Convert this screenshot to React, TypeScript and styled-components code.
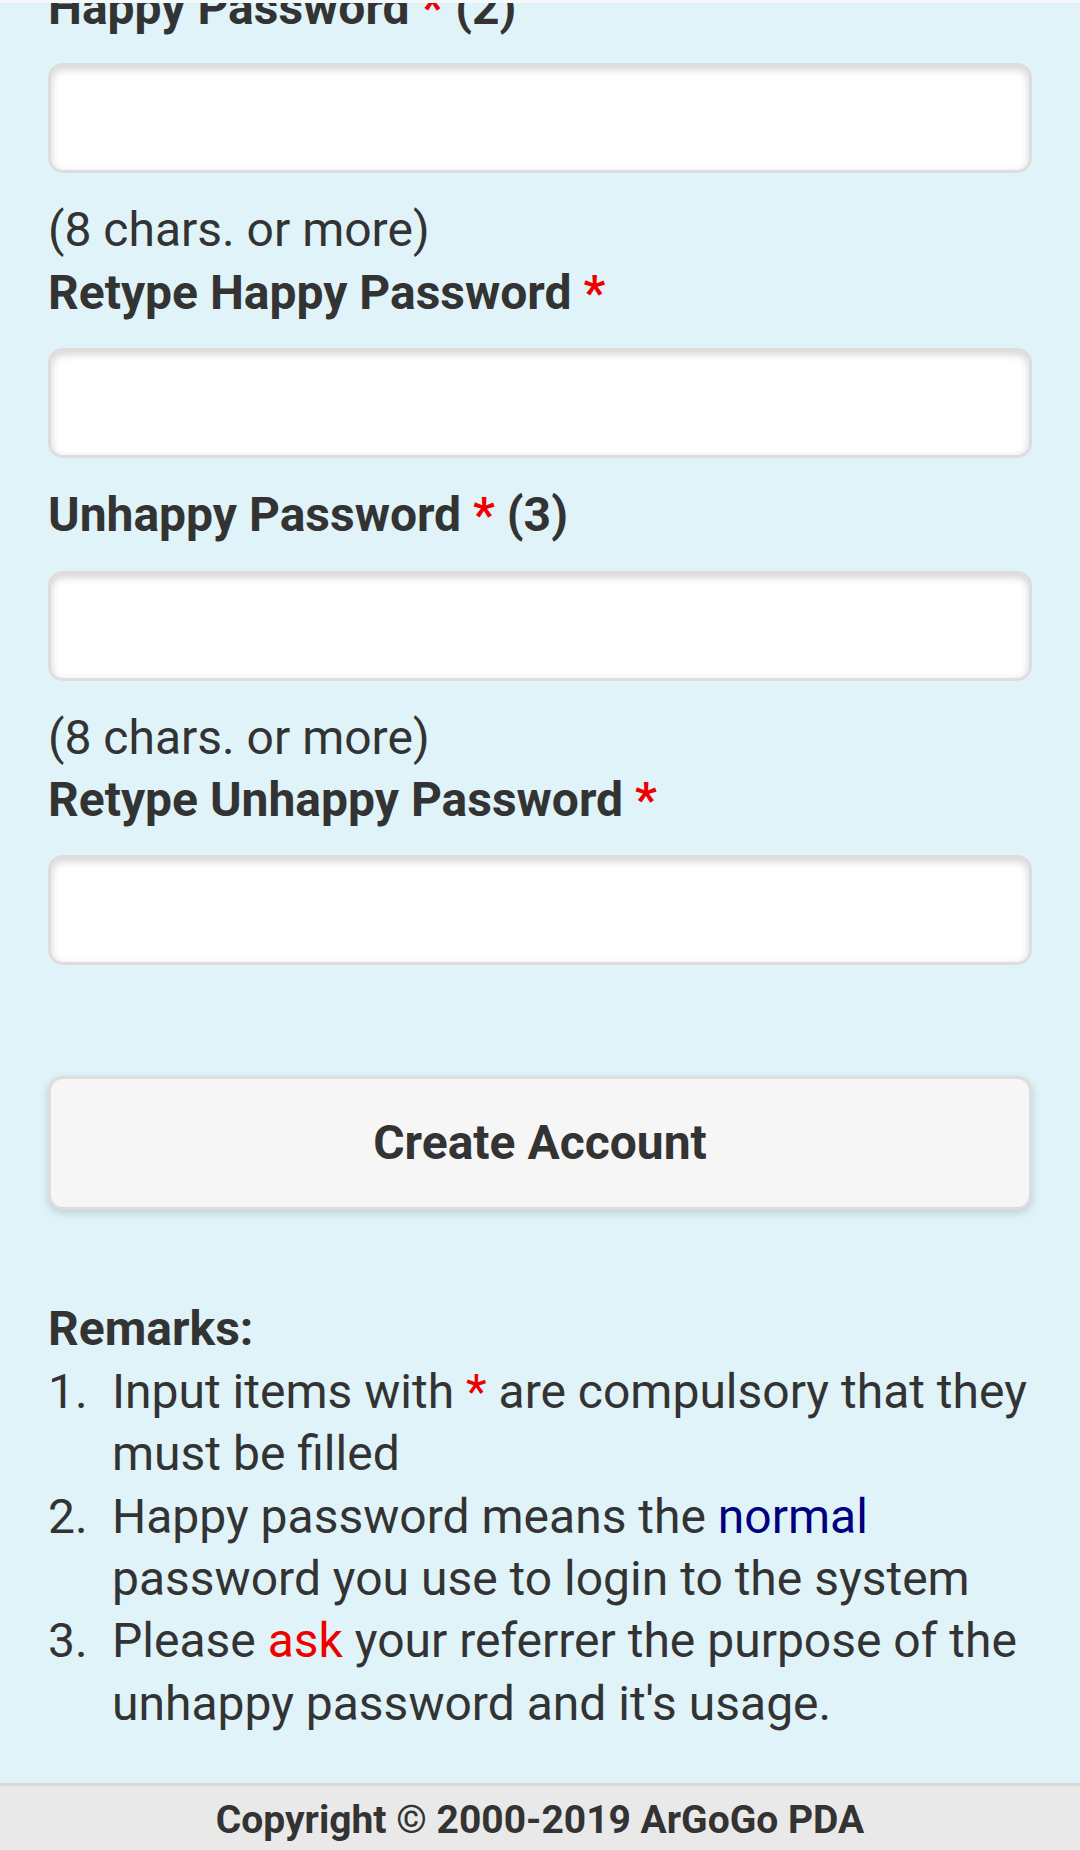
import React from "react";
import styled, { createGlobalStyle } from "styled-components";

const GlobalStyle = createGlobalStyle`
  html, body {
    margin: 0;
    padding: 0;
  }
  body {
    background: #dff3f8;
    font-family: Roboto, "Noto Sans", "Liberation Sans", sans-serif;
    color: #333;
  }
`;

const Page = styled.div`
  position: relative;
  height: 1850px;
  overflow: hidden;
  display: flex;
  flex-direction: column;
  font-size: 48px;
  line-height: 62.4px;
`;

// thin strip of the fixed header that shows above the scrolled content
const TopStrip = styled.div`
  position: absolute;
  top: 0;
  left: 0;
  right: 0;
  height: 3px;
  background: #f3f8fa;
`;

const Content = styled.div`
  margin-top: -23px;
  padding: 0 48px;
`;

const Label = styled.label`
  display: block;
  font-weight: 700;
`;

const Star = styled.span`
  color: #ee0000;
`;

const TextInput = styled.input`
  display: block;
  box-sizing: border-box;
  width: 100%;
  height: 110px;
  margin: 24px 0 26px;
  padding: 0 24px;
  border: 3px solid #dddddd;
  border-radius: 15px;
  background: #fff;
  box-shadow: inset 0 3px 9px rgba(0, 0, 0, 0.18);
  font: inherit;
  outline: none;
`;

const Hint = styled.div``;

const Button = styled.button`
  display: block;
  box-sizing: border-box;
  width: 100%;
  height: 134px;
  margin-top: 111px;
  border: 3px solid #dddddd;
  border-radius: 15px;
  background: #f6f6f6;
  box-shadow: 0 3px 9px rgba(0, 0, 0, 0.15);
  color: #333;
  font: inherit;
  font-weight: 700;
  cursor: pointer;
`;

const Remarks = styled.div`
  margin: 88px 0 48px;
`;

const RemarksTitle = styled.div`
  font-weight: 700;
`;

const List = styled.ol`
  list-style: none;
  margin: 0;
  padding: 0;
`;

const Item = styled.li`
  display: flex;
`;

const Num = styled.span`
  flex: 0 0 64px;
`;

const Normal = styled.span`
  color: #000080;
`;

const Ask = styled.span`
  color: #ee0000;
`;

const Footer = styled.footer`
  flex-shrink: 0;
  padding: 3px 0 4px;
  border-top: 3px solid #dadada;
  background: #e9e9e9;
  text-align: center;
  font-size: 39px;
  font-weight: 700;
`;

type FieldProps = {
  label: string;
  note?: string;
  hint?: boolean;
};

function Field({ label, note, hint }: FieldProps) {
  return (
    <>
      <Label>
        {label} <Star>*</Star>
        {note ? ` ${note}` : ""}
      </Label>
      <TextInput type="password" />
      {hint && <Hint>(8 chars. or more)</Hint>}
    </>
  );
}

export default function App() {
  return (
    <Page>
      <GlobalStyle />
      <TopStrip />
      <Content>
        <Field label="Happy Password" note="(2)" hint />
        <Field label="Retype Happy Password" />
        <Field label="Unhappy Password" note="(3)" hint />
        <Field label="Retype Unhappy Password" />

        <Button type="button">Create Account</Button>

        <Remarks>
          <RemarksTitle>Remarks:</RemarksTitle>
          <List>
            <Item>
              <Num>1.</Num>
              <span>
                Input items with <Star>*</Star> are compulsory that they must be
                filled
              </span>
            </Item>
            <Item>
              <Num>2.</Num>
              <span>
                Happy password means the <Normal>normal</Normal> password you use
                to login to the system
              </span>
            </Item>
            <Item>
              <Num>3.</Num>
              <span>
                Please <Ask>ask</Ask> your referrer the purpose of the unhappy
                password and it's usage.
              </span>
            </Item>
          </List>
        </Remarks>
      </Content>
      <Footer>Copyright © 2000-2019 ArGoGo PDA</Footer>
    </Page>
  );
}
